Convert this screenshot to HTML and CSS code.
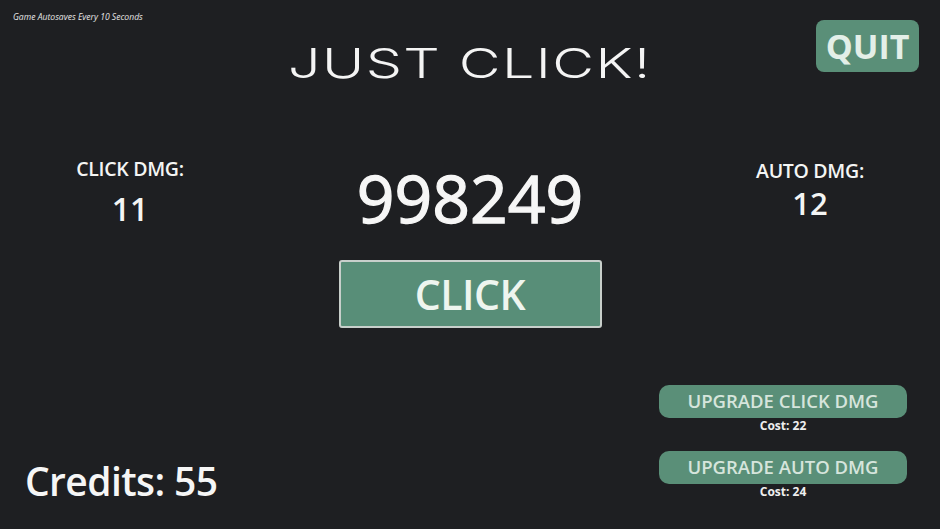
FILE: index.html
```html
<!DOCTYPE html>
<html lang="en">
<head>
<meta charset="utf-8">
<title>Just Click!</title>
<link rel="stylesheet" href="styles.css">
</head>
<body>
<div class="screen">
  <header class="header">
    <p class="note">Game Autosaves Every 10 Seconds</p>
    <h1 class="title"><span class="title-text">JUST CLICK!</span></h1>
    <button class="quit" type="button">QUIT</button>
  </header>

  <main class="middle">
    <section class="stat stat-left">
      <div class="stat-label">CLICK DMG:</div>
      <div class="stat-value value-left">11</div>
    </section>
    <section class="center">
      <div class="counter">998249</div>
      <button class="click-btn" type="button">CLICK</button>
    </section>
    <section class="stat stat-right">
      <div class="stat-label">AUTO DMG:</div>
      <div class="stat-value value-right">12</div>
    </section>
  </main>

  <footer class="bottom">
    <div class="credits">Credits: 55</div>
    <div class="upgrades">
      <div class="upgrade">
        <button class="upgrade-btn" type="button">UPGRADE CLICK DMG</button>
        <div class="cost">Cost: 22</div>
      </div>
      <div class="upgrade upgrade-second">
        <button class="upgrade-btn" type="button">UPGRADE AUTO DMG</button>
        <div class="cost">Cost: 24</div>
      </div>
    </div>
  </footer>
</div>
</body>
</html>
```

FILE: styles.css
```css
* { box-sizing: border-box; }

html, body {
  margin: 0;
  padding: 0;
  background: #1e1f22;
}

body {
  font-family: "Open Sans", "Noto Sans", sans-serif;
  color: #f4f5f4;
}

.screen {
  width: 940px;
  height: 529px;
  overflow: hidden;
  display: flex;
  flex-direction: column;
  background: #1e1f22;
}

/* Header */
.header {
  display: grid;
  grid-template-columns: 1fr auto 1fr;
  align-items: start;
  padding: 13px 13px 0 13px;
}

.note {
  margin: 0;
  justify-self: start;
  font-size: 8.6px;
  line-height: 1;
  font-style: italic;
  color: #e6e6e6;
  letter-spacing: 0;
}

.title {
  margin: 30px 0 0 0;
  font-family: "Inter", "Liberation Sans", sans-serif;
  font-weight: 300;
  font-size: 41px;
  line-height: 1;
  color: #f4f4f4;
}

.title-text {
  display: inline-block;
  transform: scaleX(1.4);
  letter-spacing: 1px;
}

.quit {
  justify-self: end;
  margin: 7px 8px 0 0;
  width: 103px;
  height: 52px;
  border: none;
  border-radius: 8px;
  background: #5a8f78;
  color: #e3efe8;
  font-family: inherit;
  font-weight: 700;
  font-size: 34px;
  line-height: 1;
  padding: 0;
}

/* Middle */
.middle {
  display: grid;
  grid-template-columns: 260px 1fr 260px;
  margin-top: 75px;
}

.stat {
  display: flex;
  flex-direction: column;
  align-items: center;
}

.stat-label {
  font-size: 19.5px;
  font-weight: 600;
  line-height: 1;
  letter-spacing: -0.3px;
}

.stat-right { margin-top: 2px; }

.stat-value {
  font-weight: 600;
  line-height: 1;
}

.value-left { font-size: 32px; margin-top: 14px; }
.value-right { font-size: 31px; margin-top: 7px; }

.center {
  display: flex;
  flex-direction: column;
  align-items: center;
  margin-top: 5px;
}

.counter {
  font-size: 66px;
  font-weight: 400;
  line-height: 1;
  -webkit-text-stroke: 1.3px #f6f6f6;
  color: #f6f6f6;
}

.click-btn {
  margin-top: 30px;
  width: 263px;
  height: 68px;
  border: 2px solid #c8cfcb;
  border-radius: 3px;
  background: #588e78;
  color: #eef5ef;
  font-family: inherit;
  font-weight: 600;
  font-size: 41px;
  letter-spacing: -0.5px;
  line-height: 1;
  padding: 0;
}

/* Bottom */
.bottom {
  display: flex;
  justify-content: space-between;
  align-items: flex-start;
  padding: 0 33px 0 25px;
  margin-top: 57px;
}

.credits {
  margin-top: 76px;
  font-size: 39px;
  font-weight: 600;
  line-height: 1;
  letter-spacing: -0.6px;
  color: #f6f6f6;
}

.upgrades {
  display: flex;
  flex-direction: column;
  align-items: center;
}

.upgrade {
  display: flex;
  flex-direction: column;
  align-items: center;
}

.upgrade-second { margin-top: 19px; }

.upgrade-btn {
  width: 248px;
  height: 33px;
  border: none;
  border-radius: 10px;
  background: #5a8f78;
  color: #d6e5dc;
  font-family: inherit;
  font-weight: 600;
  font-size: 18.5px;
  line-height: 1;
  padding: 0;
}

.cost {
  margin-top: 2px;
  font-size: 12px;
  font-weight: 700;
  line-height: 1;
  color: #eeeeee;
}
```
